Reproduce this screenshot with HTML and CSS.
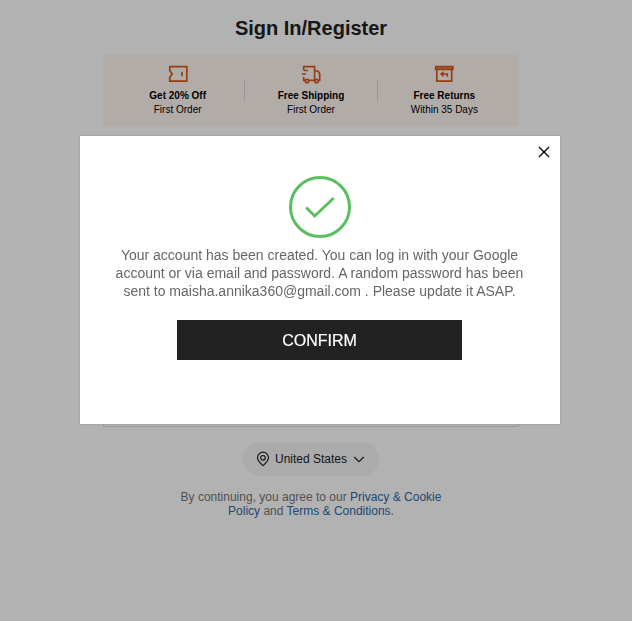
FILE: index.html
```html
<!DOCTYPE html>
<html lang="en">
<head>
<meta charset="utf-8">
<title>Sign In/Register</title>
<link rel="stylesheet" href="styles.css">
</head>
<body>
<main class="login">
  <h1 class="title">Sign In/Register</h1>
  <section class="benefits">
    <div class="benefit">
      <svg class="icon" width="20" height="20" viewBox="0 0 20 20"><path d="M1.8 2.7H18.8V17.2H1.8V13.2L4.2 10L1.8 6.7ZM14 7.8V12.2"/></svg>
      <strong>Get 20% Off</strong>
      <span>First Order</span>
    </div>
    <div class="benefit">
      <svg class="icon" width="20" height="20" viewBox="0 0 20 20"><path d="M2.7 6V2.7H13.6V16.4H8.3M13.6 7H17L18.7 9.8V16.4H17.3M13.6 16.4H7M2.7 13V16.4H4.5M2.5 6.5H7M1 10H5"/><circle cx="6" cy="17" r="1.7"/><circle cx="15.6" cy="17" r="1.7"/></svg>
      <strong>Free Shipping</strong>
      <span>First Order</span>
    </div>
    <div class="benefit">
      <svg class="icon" width="20" height="20" viewBox="0 0 20 20"><path class="lid" d="M1.7 2.7H18.8V5.3H1.7Z"/><path d="M2.8 5.5V17.2H17.7V5.5M7 10H13.3V12.8"/><path class="solid" d="M5.8 10L9.6 7V13Z"/></svg>
      <strong>Free Returns</strong>
      <span>Within 35 Days</span>
    </div>
  </section>
  <div class="form-box"></div>
  <button class="country" type="button">
    <svg width="14" height="16" viewBox="0 0 14 16"><path d="M7 14.6C4.7 12.6 1.5 9.8 1.5 6.7A5.5 5.5 0 0 1 12.5 6.7C12.5 9.8 9.3 12.6 7 14.6Z"/><circle cx="7" cy="6.8" r="2.3"/></svg>
    <span>United States</span>
    <svg width="12" height="8" viewBox="0 0 12 8"><path d="M1.2 2L6 6.7L10.8 2"/></svg>
  </button>
  <p class="terms">By continuing, you agree to our <a>Privacy &amp; Cookie Policy</a> and <a>Terms &amp; Conditions.</a></p>
</main>
<div class="overlay">
  <div class="dialog" role="dialog">
    <svg class="close" width="12" height="12" viewBox="0 0 12 12"><path d="M1 1L11 11M11 1L1 11"/></svg>
    <svg class="success" width="62" height="62" viewBox="0 0 62 62"><circle cx="31" cy="31" r="29.5"/><path d="M17.2 31.5L25.7 40L44.7 22"/></svg>
    <p class="message">Your account has been created. You can log in with your Google account or via email and password. A random password has been sent to maisha.annika360@gmail.com . Please update it ASAP.</p>
    <button class="confirm" type="button">CONFIRM</button>
  </div>
</div>
</body>
</html>
```
FILE: styles.css
```css
* {
  box-sizing: border-box;
}

body {
  margin: 0;
  height: 621px;
  overflow: hidden;
  background: #fff;
  font-family: "Liberation Sans", Arial, sans-serif;
}

svg {
  display: block;
  fill: none;
}

button {
  border: 0;
  font-family: inherit;
}

.login {
  display: flex;
  flex-direction: column;
  align-items: center;
  width: 416px;
  margin-left: 103px;
  padding-top: 16px;
}

.title {
  margin: 0 0 15px;
  color: #222;
  font-size: 20px;
  line-height: 24px;
}

.benefits {
  display: flex;
  width: 416px;
  height: 71px;
  padding: 9px 8px 0;
  background: #fff6f3;
}

.benefit {
  position: relative;
  flex: 1;
  display: flex;
  flex-direction: column;
  align-items: center;
  color: #000;
  font-size: 10px;
  line-height: 14px;
}

.benefit + .benefit::before {
  content: "";
  position: absolute;
  left: -1px;
  top: 15px;
  width: 1px;
  height: 22px;
  background: #dcd5d3;
}

.benefit + .benefit:nth-child(2)::before {
  left: 0;
}

.icon {
  margin-bottom: 5px;
  stroke: #d9581a;
  stroke-width: 1.7;
}

.lid {
  fill: #e8926a;
}

.solid {
  fill: #d9581a;
  stroke: none;
}

.form-box {
  width: 416px;
  height: 281px;
  margin-top: 20px;
  border: 1px solid #e0e0e0;
}

.country {
  display: flex;
  align-items: center;
  justify-content: center;
  width: 136px;
  height: 34px;
  margin-top: 15px;
  padding: 0 1px 0 0;
  border-radius: 17px;
  background: #f5f5f5;
  color: #222;
  font-size: 12px;
  gap: 6px;
  stroke: #222;
  stroke-width: 1.2;
}

.country span {
  stroke: none;
}

.country svg:first-child {
  margin-right: -1px;
}

.terms {
  width: 280px;
  margin: 14px 0 0;
  color: #767676;
  font-size: 12px;
  line-height: 14px;
  text-align: center;
}

.terms a {
  color: #2d68a8;
}

.overlay {
  position: fixed;
  inset: 0;
  background: rgba(0, 0, 0, 0.3);
}

.dialog {
  position: relative;
  display: flex;
  flex-direction: column;
  align-items: center;
  width: 480px;
  height: 288px;
  margin: 136px 0 0 80px;
  padding: 40px 1px 0 0;
  background: #fff;
  box-shadow: 0 0 2px rgba(0, 0, 0, 0.2);
}

.close {
  position: absolute;
  top: 10px;
  right: 10px;
  stroke: #000;
  stroke-width: 1.3;
}

.success {
  stroke: #5bbf60;
  stroke-width: 3;
}

.message {
  width: 416px;
  margin: 8px 0 20px;
  color: #666;
  font-size: 14px;
  line-height: 18px;
  text-align: center;
}

.confirm {
  width: 285px;
  height: 40px;
  padding: 2px 0 0;
  background: #222;
  color: #fff;
  font-size: 16px;
  -webkit-text-stroke: 0.2px #fff;
}
```
